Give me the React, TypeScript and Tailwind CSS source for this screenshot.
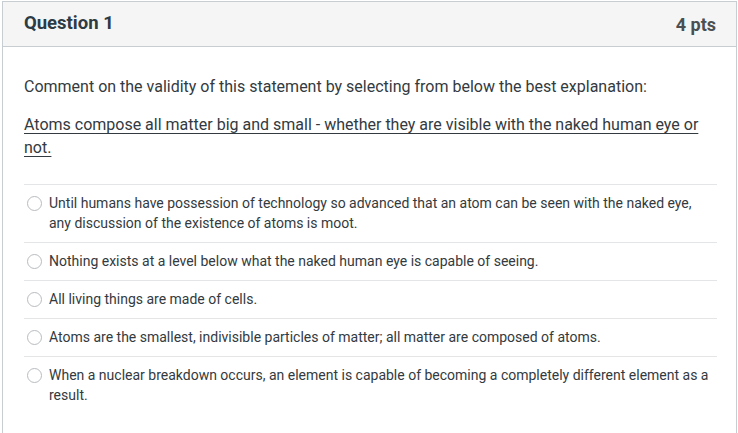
import React from 'react';

const options = [
    'Until humans have possession of technology so advanced that an atom can be seen with the naked eye, any discussion of the existence of atoms is moot.',
    'Nothing exists at a level below what the naked human eye is capable of seeing.',
    'All living things are made of cells.',
    'Atoms are the smallest, indivisible particles of matter; all matter are composed of atoms.',
    'When a nuclear breakdown occurs, an element is capable of becoming a completely different element as a result.',
];

export default function App() {
    return (
        <div className="w-[738px] h-[433px] bg-white overflow-hidden" style={{ fontFamily: 'Roboto, "Liberation Sans", sans-serif' }}>
            <div className="ml-[2px] mt-[1px] w-[735px] h-[440px] border border-b-0 border-[#c7cdd1] text-[#333a40]">
                {/* Header */}
                <div className="h-[45px] flex items-center justify-between px-[21px] pr-[20px] bg-[#f5f5f5] border-b border-[#c7cdd1]">
                    <h2 className="text-[18.5px] font-bold text-[#2d3b45]">Question 1</h2>
                    <span className="text-[18px] font-bold text-[#4a4f53]">4 pts</span>
                </div>

                {/* Body */}
                <div className="px-[21px] pt-[28px]">
                    <p className="text-[16px] leading-[23px]">
                        Comment on the validity of this statement by selecting from below the best explanation:
                    </p>
                    <p className="mt-[15px] text-[16px] leading-[23px] underline underline-offset-[3px] pr-[10px]">
                        Atoms compose all matter big and small - whether they are visible with the naked human eye or not.
                    </p>

                    <div className="mt-[25px] mr-[-2px]">
                        {options.map((opt) => (
                            <label key={opt} className="flex items-start gap-[7px] border-t border-[#e3e5e7] pt-[8px] pb-[9px] pr-[6px]">
                                <span className="mt-[3px] ml-[3px] w-[15px] h-[15px] shrink-0 rounded-full border border-[#b8bcc0] bg-white" />
                                <span className="text-[14px] leading-[20px]">{opt}</span>
                            </label>
                        ))}
                    </div>
                </div>
            </div>
        </div>
    );
}
